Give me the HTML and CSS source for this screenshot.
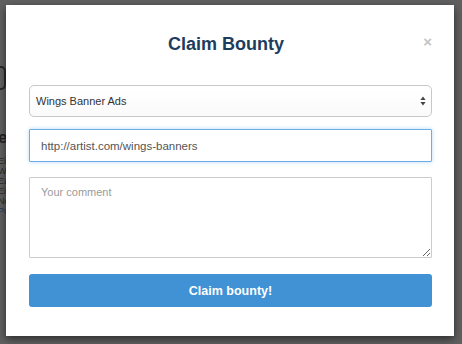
FILE: index.html
```html
<!DOCTYPE html>
<html lang="en">

<head>
    <meta charset="UTF-8">
    <title>Claim Bounty</title>
    <link rel="stylesheet" href="styles.css">
</head>

<body>
    <div class="page">
        <div class="page-box"></div>
        <div class="page-head">e</div>
        <div class="page-text">
            <p>Ei</p>
            <p>W</p>
            <p>Ea</p>
            <p>Ei</p>
            <p>Ne</p>
            <p class="link">Pu</p>
        </div>
    </div>

    <div class="modal">
        <div class="modal-header">
            <h3 class="modal-title">Claim Bounty</h3>
            <span class="close">&times;</span>
        </div>
        <form class="modal-body">
            <div class="select">
                <span>Wings Banner Ads</span>
                <svg class="caret" width="6" height="10" viewBox="0 0 6 10">
                    <path d="M3 0.5 L5.6 4 L0.4 4 Z" fill="#444"/>
                    <path d="M3 9.5 L5.6 6 L0.4 6 Z" fill="#444"/>
                </svg>
            </div>
            <input class="field focus" type="text" value="http://artist.com/wings-banners">
            <textarea class="field comment" placeholder="Your comment"></textarea>
            <button class="btn" type="button">Claim bounty!</button>
        </form>
    </div>
</body>

</html>
```

FILE: styles.css
```css
html,
body {
    margin: 0;
    height: 100%;
}

body {
    background: #606060;
    font-family: "Liberation Sans", Arial, sans-serif;
    overflow: hidden;
    position: relative;
}

.page {
    padding-top: 66px;
    color: #1c1c1c;
}

.page-box {
    width: 4px;
    height: 20px;
    border: 2px solid #2a2a2a;
    border-left: 0;
    border-radius: 0 5px 5px 0;
}

.page-head {
    margin-top: 38px;
    margin-left: -2px;
    font-size: 17px;
    font-weight: bold;
    color: #222;
}

.page-text {
    margin-top: 8px;
    margin-left: -2px;
    font-size: 9px;
    line-height: 10px;
    color: #2b2b2b;
}

.page-text p {
    margin: 0;
}

.page-text .link {
    color: #233a55;
}

.modal {
    position: absolute;
    left: 6px;
    top: 5px;
    width: 448px;
    height: 331px;
    background: #fff;
    box-shadow: 0 3px 8px rgba(0, 0, 0, .55);
    box-sizing: border-box;
    padding: 0 22px 0 23px;
}

.modal-header {
    position: relative;
    height: 80px;
    display: flex;
    align-items: center;
    justify-content: center;
}

.modal-title {
    margin: 0;
    font-size: 18px;
    font-weight: bold;
    color: #1d3d5e;
    padding: 0 9px 1px 0;
}

.close {
    position: absolute;
    right: 0;
    top: 29px;
    font-size: 15px;
    font-weight: bold;
    color: #c4c4c4;
    line-height: 1;
}

.modal-body {
    display: flex;
    flex-direction: column;
    gap: 12px;
}

.select {
    height: 32px;
    border: 1px solid #c8c8c8;
    border-radius: 5px;
    background: linear-gradient(#fff, #fafafa);
    display: flex;
    align-items: center;
    justify-content: space-between;
    padding: 0 5px 0 6px;
    font-size: 11px;
    color: #333;
    box-sizing: border-box;
}

.caret {
    display: block;
}

.field {
    display: block;
    width: 100%;
    box-sizing: border-box;
    margin: 0;
    font-family: "Liberation Sans", Arial, sans-serif;
    color: #555;
    border: 1px solid #ccc;
    border-radius: 1px;
    outline: none;
}

.focus {
    height: 33px;
    padding: 0 11px;
    font-size: 11.5px;
    border-color: #6aaee6;
    box-shadow: 0 0 4px rgba(102, 175, 233, .45);
}

.comment {
    margin-top: 3px;
    height: 81px;
    padding: 8px 11px;
    font-size: 11px;
    resize: vertical;
}

.comment::placeholder {
    color: #9a9a9a;
}

.btn {
    margin-top: 4px;
    height: 33px;
    border: 0;
    border-radius: 3px;
    background: #4092d4;
    color: #fff;
    font-family: "Liberation Sans", Arial, sans-serif;
    font-size: 12.5px;
    font-weight: bold;
}
```
